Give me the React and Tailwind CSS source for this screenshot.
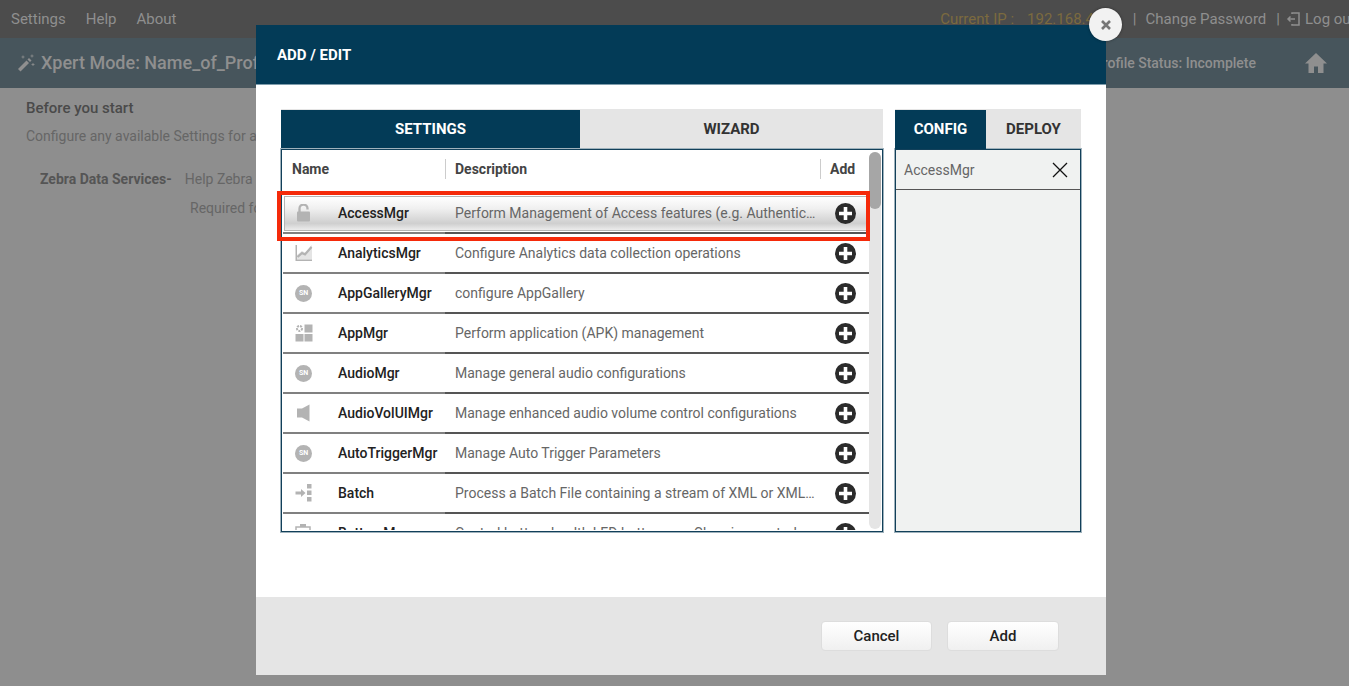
// App.jsx
const rows = [
  { name: 'AccessMgr', desc: 'Perform Management of Access features (e.g. Authentication)', icon: 'lock', active: true },
  { name: 'AnalyticsMgr', desc: 'Configure Analytics data collection operations', icon: 'chart' },
  { name: 'AppGalleryMgr', desc: 'configure AppGallery', icon: 'sn' },
  { name: 'AppMgr', desc: 'Perform application (APK) management', icon: 'apps' },
  { name: 'AudioMgr', desc: 'Manage general audio configurations', icon: 'sn' },
  { name: 'AudioVolUIMgr', desc: 'Manage enhanced audio volume control configurations', icon: 'speaker' },
  { name: 'AutoTriggerMgr', desc: 'Manage Auto Trigger Parameters', icon: 'sn' },
  { name: 'Batch', desc: 'Process a Batch File containing a stream of XML or XML commands', icon: 'batch' },
  { name: 'BatteryMgr', desc: 'Control battery health LED battery use Charging control', icon: 'battery' },
];

function RowIcon({ type }) {
  if (type === 'sn') {
    return (
      <div className="flex h-[17px] w-[17px] items-center justify-center rounded-full bg-[#b3b3b3] text-[7px] font-bold text-white">
        SN
      </div>
    );
  }
  return (
    <svg width="18" height="18" viewBox="0 0 18 18" fill="#b3b3b3">
      {type === 'lock' && (
        <>
          <rect x="2" y="7.5" width="13" height="10" rx="1" />
          <path d="M4.5 8V4.5a4 4 0 0 1 8 0V5.5" fill="none" stroke="#b3b3b3" strokeWidth="2.3" />
        </>
      )}
      {type === 'chart' && (
        <>
          <path d="M0.5 1h1.5v14.5H17V17H0.5z" />
          <path d="M2 15.5V11l5-4 3 1.5L17 1v14.5z" opacity="0.35" />
          <path d="M2.5 13l4.5-4 3 1.5L16.5 3" fill="none" stroke="#b3b3b3" strokeWidth="2.2" />
        </>
      )}
      {type === 'apps' && (
        <>
          <circle cx="4.5" cy="4.5" r="2.5" fill="none" stroke="#b3b3b3" strokeWidth="2" strokeDasharray="2 1" />
          <rect x="9.5" y="0.5" width="8" height="8" />
          <rect x="0.5" y="10" width="8" height="7.5" />
          <rect x="9.5" y="10" width="8" height="7.5" />
        </>
      )}
      {type === 'speaker' && <path d="M2 4.5h5L14.5 0.5v17L7 13.5H2z" />}
      {type === 'batch' && (
        <>
          <path d="M0.5 7.5h5.5V5l4.5 4-4.5 4v-2.5H0.5z" />
          <rect x="12" y="0" width="4.5" height="4.5" />
          <rect x="12" y="6.5" width="4.5" height="4.5" />
          <rect x="12" y="13" width="4.5" height="4.5" />
        </>
      )}
      {type === 'battery' && (
        <>
          <rect x="1" y="3" width="14" height="14" fill="none" stroke="#b3b3b3" strokeWidth="1.5" />
          <rect x="5" y="6" width="6" height="8" />
          <rect x="5" y="0" width="6" height="3" />
        </>
      )}
    </svg>
  );
}

function PlusIcon() {
  return (
    <svg width="21" height="21" viewBox="0 0 21 21">
      <circle cx="10.5" cy="10.5" r="10.5" fill="#2b2b2b" />
      <path d="M10.5 4v13M4 10.5h13" stroke="#fff" strokeWidth="3.6" />
    </svg>
  );
}

function Row({ row }) {
  return (
    <div className="relative flex h-10 shrink-0 items-center pb-[2px]">
      {row.active && (
        <div className="absolute top-[2px] right-0 left-[1px] h-[35px] border border-[#b5b5b5] bg-[linear-gradient(#fff_0%,#f0f0f0_35%,#cfcfcf_80%,#ececec_100%)]" />
      )}
      <div className="relative flex w-[55px] justify-start pl-[12px]">
        <RowIcon type={row.icon} />
      </div>
      <div className="relative w-[107px] text-sm font-medium text-[#222]">{row.name}</div>
      <div className="relative w-[371px] truncate pl-[10px] text-sm text-[#666]">{row.desc}</div>
      <div className="relative ml-[19px] flex w-[21px] justify-center">
        <PlusIcon />
      </div>
      <div className="absolute right-0 bottom-0 left-0 flex h-[2px]">
        <div className="w-[162px] bg-[#808080]" />
        <div className="flex-1 bg-[#555]" />
      </div>
    </div>
  );
}

export default function App() {
  return (
    <div className="relative h-[686px] w-full overflow-hidden bg-[#8e8e8e] font-['Roboto',sans-serif]">
      {/* page behind the dialog */}
      <div className="flex h-[38px] items-center justify-between bg-[#4c4c4c] pl-[11px] text-[#8f8f8f]">
        <div className="flex gap-5 text-[15px]">
          <span>Settings</span>
          <span>Help</span>
          <span>About</span>
        </div>
        <div className="flex items-center whitespace-nowrap text-[15px]">
          <span className="text-[#7b6a3f]">Current IP :</span>
          <span className="ml-[13px] text-[#7b6a3f]">192.168.4.15</span>
          <span className="ml-[18px]">|</span>
          <span className="ml-[9px]">Change Password</span>
          <span className="ml-[10px]">|</span>
          <svg className="ml-[6px]" width="14" height="14" viewBox="0 0 14 14" fill="none" stroke="#8f8f8f" strokeWidth="1.5">
            <path d="M6 2V1h7v12H6v-1M9 7H2M4.5 4.5L2 7l2.5 2.5" />
          </svg>
          <span className="ml-[5px] w-[44px] overflow-hidden">Log out</span>
        </div>
      </div>
      <div className="flex h-[50px] items-center justify-between bg-[#47555c] pr-[21px] pl-[17px] text-[#8f8f8f]">
        <div className="flex items-center gap-[6px]">
          <svg width="18" height="18" viewBox="0 0 18 18" fill="#8f8f8f">
            <path d="M1 15l8.5-8.5 2.5 2.5L3.5 17.5z" />
            <path d="M10.5 5.5l1.5-1.5 2.5 2.5-1.5 1.5z" />
            <path d="M6 1.5v3M4.5 3h3M15 0.5v3M13.5 2h3M16 9v3M14.5 10.5h3" stroke="#8f8f8f" strokeWidth="0.8" fill="none" />
          </svg>
          <span className="text-lg font-medium whitespace-nowrap">Xpert Mode: Name_of_Profile</span>
        </div>
        <div className="flex items-center gap-[48px]">
          <span className="text-sm font-medium">Profile Status: Incomplete</span>
          <svg width="24" height="22" viewBox="0 0 24 22" fill="#8f8f8f">
            <path d="M12 1L1 11.5h3.5V21h5.5v-6.5h4V21h5.5v-9.5H23z" />
          </svg>
        </div>
      </div>
      <div className="pt-[9px] pl-[26px] text-[#555]">
        <div className="text-[15px] font-medium text-[#4a4a4a]">Before you start</div>
        <div className="mt-[6px] text-sm text-[#666]">Configure any available Settings for a device</div>
        <div className="mt-[23px] flex pl-[14px] text-sm">
          <span className="font-bold">Zebra Data Services-</span>
          <span className="ml-[13px] text-[#666]">Help Zebra improve</span>
        </div>
        <div className="mt-[9px] pl-[164px] text-sm text-[#666]">Required for</div>
      </div>

      {/* dialog */}
      <div className="absolute top-[25px] left-[256px] flex h-[650px] w-[850px] flex-col bg-white">
        <div className="flex h-[60px] shrink-0 items-center border-b border-[#7f9dac] bg-[#033b57] pt-px pl-[21px] text-[15px] font-bold text-white">
          ADD / EDIT
        </div>
        <div className="flex flex-1 gap-3 pt-6 pl-[25px]">
          <div className="w-[602px]">
            <div className="flex h-10 bg-[#e5e5e5] pt-px text-[15px] font-bold">
              <div className="flex w-[299px] items-center justify-center bg-[#033b57] text-white">SETTINGS</div>
              <div className="flex flex-1 items-center justify-center text-[#333]">WIZARD</div>
            </div>
            <div className="relative flex h-[383px] border border-[#12405a] p-px shadow-[0_0_0_1px_#9fb2bc]">
              <div className="flex min-w-0 flex-1 flex-col overflow-hidden">
                <div className="flex h-[38px] shrink-0 items-center pb-[2px] text-sm font-bold text-[#444]">
                  <div className="w-[162px] pl-[9px]">Name</div>
                  <div className="h-[20px] w-px bg-[#ccc]" />
                  <div className="w-[374px] pl-[9px]">Description</div>
                  <div className="h-[20px] w-px bg-[#ccc]" />
                  <div className="pl-[9px]">Add</div>
                </div>
                <div className="flex flex-col pt-[5px]">
                  {rows.map((row) => (
                    <Row key={row.name} row={row} />
                  ))}
                </div>
              </div>
              <div className="my-px w-[12px] shrink-0 rounded-full bg-[#e5e5e5]">
                <div className="h-[57px] w-full rounded-full bg-[#a6a6a6]" />
              </div>
              {/* red callout */}
              <div className="absolute top-[41px] left-[-5px] h-[50px] w-[593px] border-4 border-[#f52a0a]" />
            </div>
          </div>
          <div className="w-[186px]">
            <div className="flex h-10 bg-[#e5e5e5] pt-px text-[15px] font-bold">
              <div className="flex w-[91px] items-center justify-center bg-[#033b57] text-white">CONFIG</div>
              <div className="flex flex-1 items-center justify-center text-[#333]">DEPLOY</div>
            </div>
            <div className="h-[383px] border border-[#12405a] bg-[#f0f2f1] pt-px shadow-[0_0_0_1px_#9fb2bc]">
              <div className="flex h-[39px] items-center justify-between border-b border-[#555] pr-[12px] pl-[8px] text-sm text-[#666]">
                <span>AccessMgr</span>
                <svg width="16" height="16" viewBox="0 0 16 16" stroke="#111" strokeWidth="1.3">
                  <path d="M1 1l14 14M15 1L1 15" />
                </svg>
              </div>
            </div>
          </div>
        </div>
        <div className="flex h-[78px] shrink-0 items-start justify-end gap-[15px] bg-[#e5e5e5] pt-6 pr-[47px]">
          <button className="h-[30px] w-[111px] rounded-[4px] border border-[#ddd] bg-gradient-to-b from-white to-[#f0f0f0] text-[15px] font-medium text-[#222]">
            Cancel
          </button>
          <button className="h-[30px] w-[112px] rounded-[4px] border border-[#ddd] bg-gradient-to-b from-white to-[#f0f0f0] text-[15px] font-medium text-[#222]">
            Add
          </button>
        </div>
      </div>

      {/* dialog close */}
      <div className="absolute top-[8px] left-[1089px] flex h-[33px] w-[33px] items-center justify-center rounded-full bg-[#f2f2f2] shadow-[0_0_3px_rgba(0,0,0,0.4)]">
        <svg width="10" height="10" viewBox="0 0 10 10" stroke="#777" strokeWidth="2.6">
          <path d="M1 1l8 8M9 1L1 9" />
        </svg>
      </div>
    </div>
  );
}
